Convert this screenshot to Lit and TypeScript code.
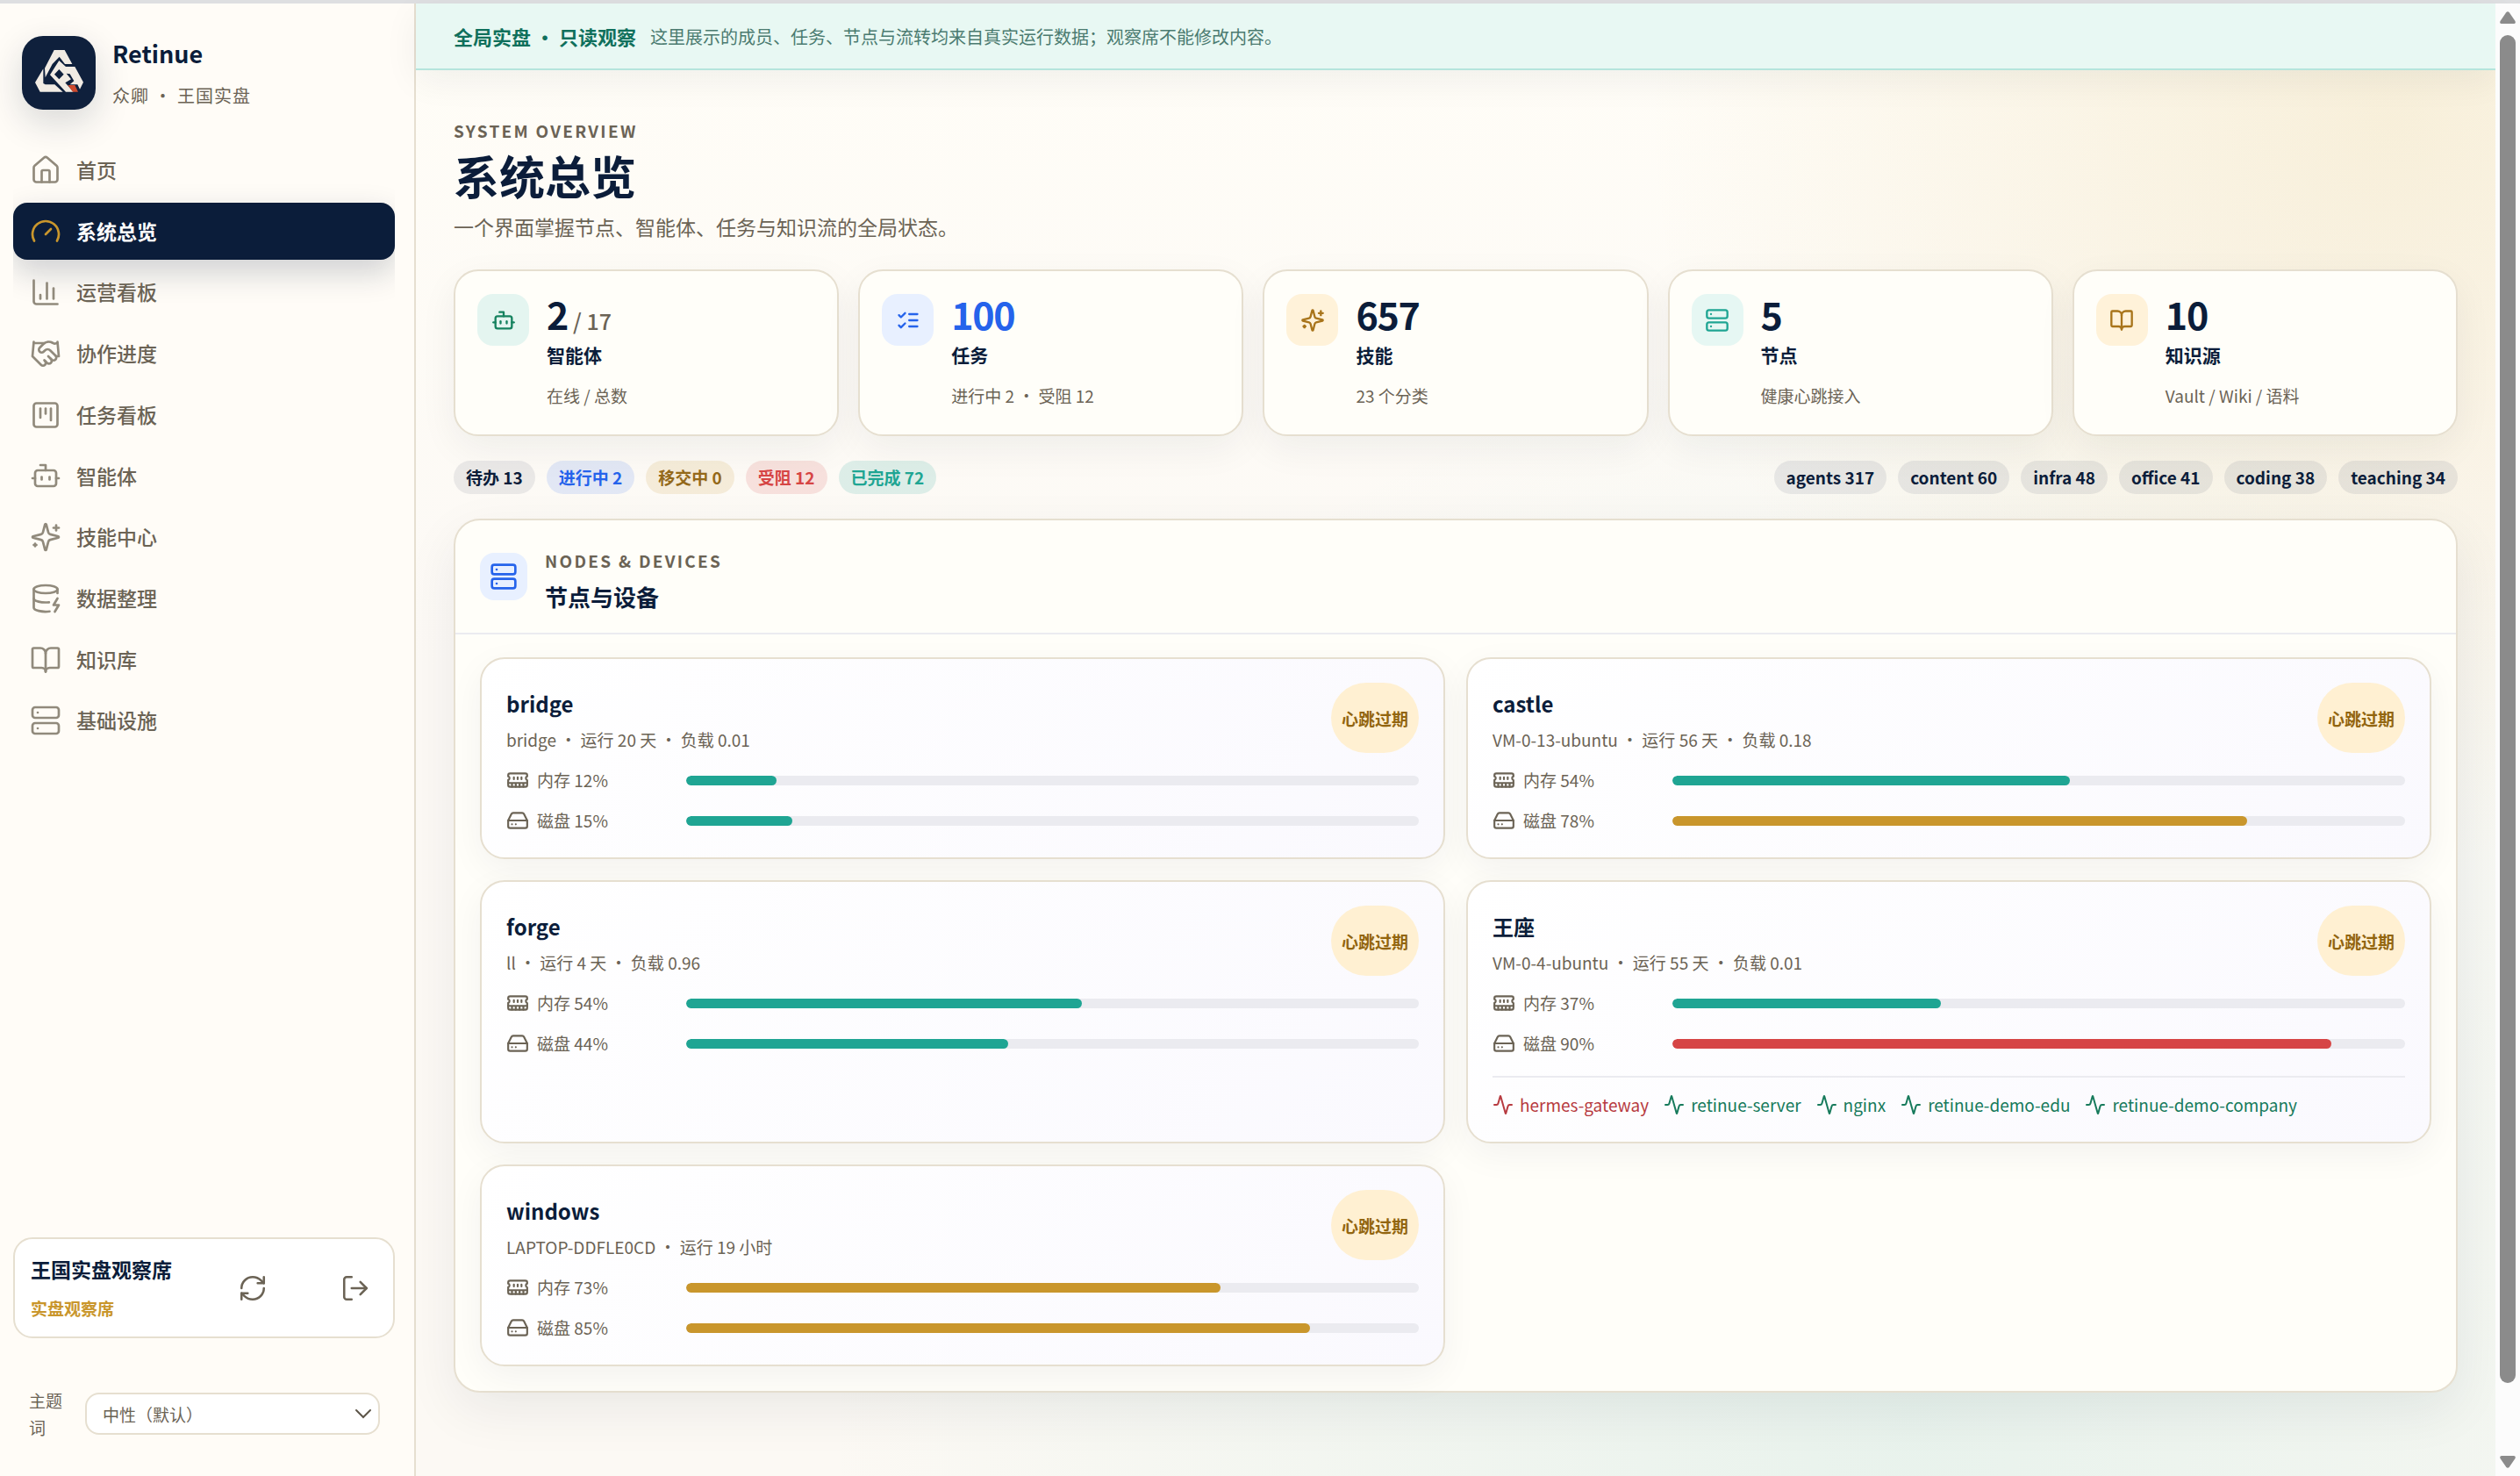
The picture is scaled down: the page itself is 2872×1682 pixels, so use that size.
import { LitElement, html, svg, css, nothing, type SVGTemplateResult } from 'lit';
import { customElement, property } from 'lit/decorators.js';
import { classMap } from 'lit/directives/class-map.js';
import { styleMap } from 'lit/directives/style-map.js';

const GLYPHS: Record<string, SVGTemplateResult> = {
  home: svg`<path d="M15 21v-8a1 1 0 0 0-1-1h-4a1 1 0 0 0-1 1v8"/><path d="M3 10a2 2 0 0 1 .709-1.528l7-5.999a2 2 0 0 1 2.582 0l7 5.999A2 2 0 0 1 21 10v9a2 2 0 0 1-2 2H5a2 2 0 0 1-2-2z"/>`,
  gauge: svg`<path d="m12 14 4-4"/><path d="M3.34 19a10 10 0 1 1 17.32 0"/>`,
  chart: svg`<path d="M3 3v16a2 2 0 0 0 2 2h16"/><path d="M18 17V9"/><path d="M13 17V5"/><path d="M8 17v-3"/>`,
  handshake: svg`<path d="m11 17 2 2a1 1 0 1 0 3-3"/><path d="m14 14 2.5 2.5a1 1 0 1 0 3-3l-3.88-3.88a3 3 0 0 0-4.24 0l-.88.88a1 1 0 1 1-3-3l2.81-2.81a5.79 5.79 0 0 1 7.06-.87l.47.28a2 2 0 0 0 1.42.25L21 4"/><path d="m21 3 1 11h-2"/><path d="M3 3 2 14l6.5 6.5a1 1 0 1 0 3-3"/><path d="M3 4h8"/>`,
  kanban: svg`<rect width="18" height="18" x="3" y="3" rx="2"/><path d="M8 7v7"/><path d="M12 7v4"/><path d="M16 7v9"/>`,
  bot: svg`<path d="M12 8V4H8"/><rect width="16" height="12" x="4" y="8" rx="2"/><path d="M2 14h2"/><path d="M20 14h2"/><path d="M15 13v2"/><path d="M9 13v2"/>`,
  sparkles: svg`<path d="M9.937 15.5A2 2 0 0 0 8.5 14.063l-6.135-1.582a.5.5 0 0 1 0-.962L8.5 9.936A2 2 0 0 0 9.937 8.5l1.582-6.135a.5.5 0 0 1 .963 0L14.063 8.5A2 2 0 0 0 15.5 9.937l6.135 1.581a.5.5 0 0 1 0 .964L15.5 14.063a2 2 0 0 0-1.437 1.437l-1.582 6.135a.5.5 0 0 1-.963 0z"/><path d="M20 3v4"/><path d="M22 5h-4"/><path d="M4 17v2"/><path d="M5 18H3"/>`,
  database: svg`<ellipse cx="12" cy="5" rx="9" ry="3"/><path d="M3 5V19A9 3 0 0 0 15 21.84"/><path d="M21 5V8"/><path d="M21 12L18 17H22L19 22"/><path d="M3 12A9 3 0 0 0 14.59 14.87"/>`,
  book: svg`<path d="M12 7v14"/><path d="M3 18a1 1 0 0 1-1-1V4a1 1 0 0 1 1-1h5a4 4 0 0 1 4 4 4 4 0 0 1 4-4h5a1 1 0 0 1 1 1v13a1 1 0 0 1-1 1h-6a3 3 0 0 0-3 3 3 3 0 0 0-3-3z"/>`,
  server: svg`<rect width="20" height="8" x="2" y="2" rx="2"/><rect width="20" height="8" x="2" y="14" rx="2"/><path d="M6 6h.01"/><path d="M6 18h.01"/>`,
  refresh: svg`<path d="M3 12a9 9 0 0 1 9-9 9.75 9.75 0 0 1 6.74 2.74L21 8"/><path d="M21 3v5h-5"/><path d="M21 12a9 9 0 0 1-9 9 9.75 9.75 0 0 1-6.74-2.74L3 16"/><path d="M8 16H3v5"/>`,
  logout: svg`<path d="m16 17 5-5-5-5"/><path d="M21 12H9"/><path d="M9 21H5a2 2 0 0 1-2-2V5a2 2 0 0 1 2-2h4"/>`,
  checks: svg`<path d="m3 17 2 2 4-4"/><path d="m3 7 2 2 4-4"/><path d="M13 6h8"/><path d="M13 12h8"/><path d="M13 18h8"/>`,
  memory: svg`<path d="M6 19v-3"/><path d="M10 19v-3"/><path d="M14 19v-3"/><path d="M18 19v-3"/><path d="M8 11V9"/><path d="M16 11V9"/><path d="M12 11V9"/><path d="M2 15h20"/><path d="M2 7a2 2 0 0 1 2-2h16a2 2 0 0 1 2 2v1.1a2 2 0 0 0 0 3.837V17a2 2 0 0 1-2 2H4a2 2 0 0 1-2-2v-5.1a2 2 0 0 0 0-3.837Z"/>`,
  disk: svg`<path d="M22 12H2"/><path d="M5.45 5.11 2 12v6a2 2 0 0 0 2 2h16a2 2 0 0 0 2-2v-6l-3.45-6.89A2 2 0 0 0 16.76 4H7.24a2 2 0 0 0-1.79 1.11z"/><path d="M6 16h.01"/><path d="M10 16h.01"/>`,
  activity: svg`<path d="M22 12h-2.48a2 2 0 0 0-1.93 1.46l-2.35 8.36a.25.25 0 0 1-.48 0L9.24 2.18a.25.25 0 0 0-.48 0l-2.35 8.36A2 2 0 0 1 4.49 12H2"/>`,
};

@customElement('line-icon')
export class LineIcon extends LitElement {
  @property() name = '';
  static styles = css`
    :host { display: block; flex: none; width: 1em; height: 1em; }
    .glyph {
      display: block; width: 100%; height: 100%; fill: none; stroke: currentColor;
      stroke-width: var(--stroke, 2); stroke-linecap: round; stroke-linejoin: round;
    }
  `;
  render() {
    return html`<svg class="glyph" viewBox="0 0 24 24" aria-hidden="true">${GLYPHS[this.name]}</svg>`;
  }
}

const NAV = [
  ['home', '首页'],
  ['gauge', '系统总览'],
  ['chart', '运营看板'],
  ['handshake', '协作进度'],
  ['kanban', '任务看板'],
  ['bot', '智能体'],
  ['sparkles', '技能中心'],
  ['database', '数据整理'],
  ['book', '知识库'],
  ['server', '基础设施'],
];

@customElement('side-bar')
export class SideBar extends LitElement {
  @property() active = '系统总览';
  static styles = css`
    :host {
      display: flex; flex-direction: column; box-sizing: border-box; width: 474px; flex: none;
      padding: 37px 22px 40px 15px; background: #fffcf7; border-right: 2px solid #e6dfd0;
    }
    .brand { display: flex; align-items: center; gap: 19px; padding-left: 10px; margin-bottom: 36px; }
    .logo { width: 84px; height: 84px; border-radius: 24px; background: #0f203c; box-shadow: 0 14px 40px rgba(11, 29, 58, .16); }
    .logo svg { display: block; width: 100%; height: 100%; }
    .brand-text { display: flex; flex-direction: column; gap: 15px; }
    .name { font-size: 27px; line-height: 36px; font-weight: 700; color: #0b1d3a; }
    .tagline { font-size: 20px; line-height: 30px; letter-spacing: 1px; color: #6b6355; }
    .nav { flex: 1; display: flex; flex-direction: column; gap: 4px; overflow: hidden; }
    .link {
      display: flex; align-items: center; gap: 17px; padding: 14px 19px; border-radius: 16px;
      font-size: 23px; line-height: 1.64; font-weight: 500; color: #6b6355; text-decoration: none;
    }
    .link line-icon { font-size: 36px; --stroke: 1.8; color: #918a7c; }
    .link.on { background: #0b1d3a; color: #fff; font-weight: 700; box-shadow: 0 14px 36px rgba(11, 29, 58, .2); }
    .link.on line-icon { color: #c9962c; }
    .user {
      display: flex; align-items: center; justify-content: space-between; padding: 17px 18px;
      background: #fff; border: 2px solid #e6dfd0; border-radius: 22px;
    }
    .who { display: flex; flex-direction: column; gap: 13px; }
    .who-name { font-size: 23px; line-height: 34px; font-weight: 700; color: #0b1d3a; }
    .who-role { font-size: 19px; line-height: 30px; font-weight: 700; color: #c9962c; }
    .tool {
      display: grid; place-items: center; width: 50px; height: 50px; padding: 0; border: 0;
      background: none; color: #6b6355; font-size: 34px; --stroke: 1.8; cursor: pointer;
    }
    .theme { display: flex; align-items: center; gap: 24px; padding: 0 17px 0 18px; margin-top: 55px; }
    .theme-label { width: 40px; font-size: 19px; line-height: 31px; color: #6b6355; }
    .pick { flex: 1; display: grid; align-items: center; }
    .pick > * { grid-area: 1 / 1; }
    .select {
      appearance: none; height: 48px; width: 100%; padding: 0 44px 0 18px; background: #fff;
      border: 2px solid #e6dfd0; border-radius: 16px; font: inherit; font-size: 19px; color: #6b6355;
    }
    .chev { justify-self: end; width: 20px; height: 12px; margin-right: 9px; fill: none; stroke: #5d5548; stroke-width: 2; stroke-linecap: round; pointer-events: none; }
  `;
  render() {
    return html`
      <div class="brand">
        <div class="logo">
          <svg viewBox="0 0 252 252" role="img" aria-label="Retinue">
            <g fill="#f1ebe3">
              <path d="M110 48H146L172 96H147L128 71L104 96L80 142L78 110Z"/>
              <path d="M73 112V162L80 166H112L140 191H62L45 159Z"/>
              <path fill-rule="evenodd" d="M127 84L150 105H181L210 158L198 182L190 166H164L178 154L164 130L152 128L168 148L148 160L176 191H150L96 133ZM127 114L111 131L127 148L143 131Z"/>
            </g>
            <path fill="#cd4a2e" d="M157 168H181L192 191H174Z"/>
          </svg>
        </div>
        <div class="brand-text">
          <div class="name">Retinue</div>
          <div class="tagline">众卿 · 王国实盘</div>
        </div>
      </div>
      <nav class="nav">
        ${NAV.map(([icon, label]) => html`
          <a href="#" class=${classMap({ link: true, on: label === this.active })}>
            <line-icon name=${icon}></line-icon><span>${label}</span>
          </a>`)}
      </nav>
      <div class="user">
        <div class="who">
          <div class="who-name">王国实盘观察席</div>
          <div class="who-role">实盘观察席</div>
        </div>
        <button class="tool" aria-label="刷新"><line-icon name="refresh"></line-icon></button>
        <button class="tool" aria-label="退出"><line-icon name="logout"></line-icon></button>
      </div>
      <div class="theme">
        <label class="theme-label" for="theme">主题词</label>
        <div class="pick">
          <select class="select" id="theme"><option>中性（默认）</option></select>
          <svg class="chev" viewBox="0 0 20 12" aria-hidden="true"><path d="M2 2l8 8 8-8"/></svg>
        </div>
      </div>
    `;
  }
}

interface NodeInfo {
  name: string;
  meta: string;
  mem: number;
  disk: number;
  services?: [string, boolean][];
}

const NODES: NodeInfo[] = [
  { name: 'bridge', meta: 'bridge · 运行 20 天 · 负载 0.01', mem: 12.3, disk: 14.5 },
  { name: 'castle', meta: 'VM-0-13-ubuntu · 运行 56 天 · 负载 0.18', mem: 54.2, disk: 78.4 },
  { name: 'forge', meta: 'll · 运行 4 天 · 负载 0.96', mem: 54, disk: 44 },
  {
    name: '王座', meta: 'VM-0-4-ubuntu · 运行 55 天 · 负载 0.01', mem: 36.6, disk: 89.9,
    services: [['hermes-gateway', false], ['retinue-server', true], ['nginx', true], ['retinue-demo-edu', true], ['retinue-demo-company', true]],
  },
  { name: 'windows', meta: 'LAPTOP-DDFLE0CD · 运行 19 小时', mem: 72.9, disk: 85.1 },
];

@customElement('node-card')
export class NodeCard extends LitElement {
  @property({ attribute: false }) node!: NodeInfo;
  static styles = css`
    :host {
      display: block; box-sizing: border-box; padding: 27px 28px; border: 2px solid #e6dfd0; border-radius: 28px;
      background: linear-gradient(135deg, #fff, #faf9fe); box-shadow: 0 12px 40px rgba(11, 29, 58, .05);
    }
    .head { display: flex; justify-content: space-between; margin-bottom: 16px; }
    .title { margin: 0 0 3px; font-size: 24px; line-height: 47px; font-weight: 700; color: #0b1d3a; }
    .meta { font-size: 19px; line-height: 30px; color: #6b6355; }
    .badge {
      display: flex; align-items: center; padding: 0 12px; border-radius: 40px; background: #fff0d2;
      font-size: 19px; font-weight: 700; color: #92650f;
    }
    .rows { display: grid; gap: 16px; }
    .row { display: grid; grid-template-columns: 205px 1fr; align-items: center; height: 30px; }
    .key { display: flex; align-items: center; gap: 9px; font-size: 19px; line-height: 30px; color: #6b6355; }
    .key line-icon { font-size: 26px; }
    .track { height: 11px; border-radius: 6px; background: #ebebf0; overflow: hidden; }
    .fill { height: 100%; border-radius: 6px; background: #1fa593; }
    .fill.warn { background: #c9962c; }
    .fill.bad { background: #d64545; }
    .services { display: flex; flex-wrap: wrap; gap: 8px 17px; margin-top: 22px; padding-top: 16px; border-top: 2px solid #ebebf0; }
    .svc { display: flex; align-items: center; gap: 7px; font-size: 19px; line-height: 30px; color: #167a5b; }
    .svc.down { color: #b73a40; }
    .svc line-icon { font-size: 24px; }
  `;
  private usage(icon: string, label: string, pct: number) {
    return html`
      <div class="row">
        <div class="key"><line-icon name=${icon}></line-icon><span>${label} ${Math.round(pct)}%</span></div>
        <div class="track" role="meter" aria-label=${label} aria-valuenow=${Math.round(pct)} aria-valuemin="0" aria-valuemax="100">
          <div class=${classMap({ fill: true, warn: pct >= 70 && pct < 88, bad: pct >= 88 })} style=${styleMap({ width: `${pct}%` })}></div>
        </div>
      </div>`;
  }
  render() {
    const n = this.node;
    return html`
      <div class="head">
        <div>
          <h3 class="title">${n.name}</h3>
          <div class="meta">${n.meta}</div>
        </div>
        <div class="badge">心跳过期</div>
      </div>
      <div class="rows">${this.usage('memory', '内存', n.mem)}${this.usage('disk', '磁盘', n.disk)}</div>
      ${n.services ? html`<div class="services">${n.services.map(([s, up]) => html`
        <span class=${classMap({ svc: true, down: !up })}><line-icon name="activity"></line-icon>${s}</span>`)}</div>` : nothing}
    `;
  }
}

const STATS = [
  { icon: 'bot', tone: 'green', value: '2', total: '17', label: '智能体', note: '在线 / 总数' },
  { icon: 'checks', tone: 'blue', value: '100', label: '任务', note: '进行中 2 · 受阻 12' },
  { icon: 'sparkles', tone: 'gold', value: '657', label: '技能', note: '23 个分类' },
  { icon: 'server', tone: 'teal', value: '5', label: '节点', note: '健康心跳接入' },
  { icon: 'book', tone: 'gold', value: '10', label: '知识源', note: 'Vault / Wiki / 语料' },
];

const STATES = [
  ['plain', '待办 13'], ['blue', '进行中 2'], ['gold', '移交中 0'], ['red', '受阻 12'], ['teal', '已完成 72'],
];

const TAGS = ['agents 317', 'content 60', 'infra 48', 'office 41', 'coding 38', 'teaching 34'];

@customElement('app-root')
export class AppRoot extends LitElement {
  static styles = css`
    :host {
      display: flex; box-sizing: border-box; min-height: 100vh; border-top: 4px solid #dedfe1;
      font-family: "Noto Sans CJK SC", "Noto Sans", sans-serif; color: #0b1d3a;
    }
    .main {
      flex: 1; min-width: 0;
      background:
        radial-gradient(circle at 95% 8%, rgba(206, 160, 44, .14), rgba(206, 160, 44, 0) 850px),
        radial-gradient(circle at 72% 96%, rgba(31, 175, 157, .09), rgba(31, 175, 157, 0) 1250px),
        linear-gradient(180deg, #fffdf7, #fcf9f5 45%, #fcf9f4);
    }
    .banner {
      display: flex; align-items: center; gap: 16px; height: 74px; padding: 0 43px;
      background: #e8f8f3; border-bottom: 2px solid #b5e5dc; box-shadow: 0 12px 40px rgba(11, 29, 58, .06);
      font-size: 20px; color: #4b7b70;
    }
    .banner strong { font-size: 22px; color: #10705c; }
    .content { display: flex; flex-direction: column; gap: 28px; padding: 55px 43px 60px; }
    .hero { margin-bottom: 3px; }
    .eyebrow { font-size: 19px; line-height: 28px; font-weight: 700; letter-spacing: .12em; color: #6b6355; }
    .title { margin: 6px 0 9px; font-size: 52px; line-height: 62px; font-weight: 700; }
    .lead { margin: 0; font-size: 23px; line-height: 36px; color: #6b6355; }
    .stats { display: grid; grid-template-columns: repeat(5, 1fr); gap: 22px; }
    .stat {
      display: flex; align-items: flex-start; gap: 20px; padding: 26px 25px; border: 2px solid #e6dfd0; border-radius: 28px;
      background: #fffef9; box-shadow: 0 14px 44px rgba(11, 29, 58, .06);
    }
    .stat-icon { display: grid; place-items: center; width: 59px; height: 59px; border-radius: 18px; font-size: 28px; }
    .stat-icon.green { background: #e4f5f0; color: #16825f; }
    .stat-icon.blue { background: #e8f0ff; color: #2563eb; }
    .stat-icon.gold { background: #fff2d9; color: #a8741a; }
    .stat-icon.teal { background: #e6f7f3; color: #1fa593; }
    .value { font-size: 43px; line-height: 44px; font-weight: 700; letter-spacing: -.03em; }
    .value.blue { color: #2563eb; }
    .total { font-size: 25px; line-height: 25px; font-weight: 500; letter-spacing: 0; color: #6b6355; margin-left: 6px; }
    .label { margin-top: 8px; font-size: 21px; line-height: 34px; font-weight: 700; }
    .note { margin-top: 13px; padding-bottom: 1px; font-size: 19px; line-height: 34px; color: #6b6355; }
    .chips { display: flex; justify-content: space-between; gap: 28px; }
    .group { display: flex; flex-wrap: wrap; gap: 13px; }
    .chip { padding: 0 14px; border-radius: 19px; font-size: 19px; line-height: 38px; font-weight: 700; background: rgba(11, 29, 58, .08); }
    .chip.blue { background: rgba(37, 99, 235, .12); color: #2563eb; }
    .chip.gold { background: rgba(201, 150, 44, .14); color: #94691a; }
    .chip.red { background: rgba(214, 69, 69, .14); color: #d64545; }
    .chip.teal { background: rgba(31, 165, 147, .14); color: #1fa593; }
    .panel { border: 2px solid #e6dfd0; border-radius: 30px; background: #fffef9; box-shadow: 0 20px 60px rgba(11, 29, 58, .07); }
    .panel-head { display: flex; align-items: center; gap: 20px; height: 128px; padding: 0 28px; border-bottom: 2px solid #ebebf0; }
    .panel-icon { display: grid; place-items: center; width: 54px; height: 54px; border-radius: 16px; background: #e8f0ff; color: #2563eb; font-size: 32px; }
    .panel-text { padding-top: 8px; }
    .panel-title { margin: 9px 0 0; font-size: 26px; line-height: 36px; font-weight: 700; }
    .nodes { display: grid; grid-template-columns: 1fr 1fr; gap: 24px; padding: 26px 28px 28px; }
    .scroll { display: flex; flex-direction: column; align-items: center; width: 28px; flex: none; background: #fcfcfc; padding: 9px 0; box-sizing: border-box; }
    .arrow { width: 18px; height: 14px; fill: #8b8b8b; flex: none; }
    .rail { flex: 1; width: 18px; padding: 13px 0 83px; display: flex; flex-direction: column; }
    .thumb { flex: 1; border-radius: 9px; background: #8b8b8b; }
  `;
  render() {
    return html`
      <side-bar></side-bar>
      <main class="main">
        <div class="banner"><strong>全局实盘 · 只读观察</strong><span>这里展示的成员、任务、节点与流转均来自真实运行数据；观察席不能修改内容。</span></div>
        <div class="content">
          <header class="hero">
            <div class="eyebrow">SYSTEM OVERVIEW</div>
            <h1 class="title">系统总览</h1>
            <p class="lead">一个界面掌握节点、智能体、任务与知识流的全局状态。</p>
          </header>
          <section class="stats">
            ${STATS.map((s) => html`
              <article class="stat">
                <div class="stat-icon ${s.tone}"><line-icon name=${s.icon}></line-icon></div>
                <div>
                  <div class=${classMap({ value: true, blue: s.tone === 'blue' })}>${s.value}${s.total ? html`<span class="total">/ ${s.total}</span>` : nothing}</div>
                  <div class="label">${s.label}</div>
                  <div class="note">${s.note}</div>
                </div>
              </article>`)}
          </section>
          <div class="chips">
            <div class="group">${STATES.map(([tone, text]) => html`<span class="chip ${tone}">${text}</span>`)}</div>
            <div class="group">${TAGS.map((t) => html`<span class="chip">${t}</span>`)}</div>
          </div>
          <section class="panel">
            <header class="panel-head">
              <div class="panel-icon"><line-icon name="server"></line-icon></div>
              <div class="panel-text">
                <div class="eyebrow">NODES &amp; DEVICES</div>
                <h2 class="panel-title">节点与设备</h2>
              </div>
            </header>
            <div class="nodes">${NODES.map((n) => html`<node-card .node=${n}></node-card>`)}</div>
          </section>
        </div>
      </main>
      <div class="scroll" aria-hidden="true">
        <svg class="arrow" viewBox="0 0 18 14"><path d="M7 1.500Q9-1 11 1.500L17.500 11Q18.500 14 16 14H2Q-.5 14 .5 11Z"/></svg>
        <div class="rail"><div class="thumb"></div></div>
        <svg class="arrow" viewBox="0 0 18 14"><path d="M7 12.500Q9 15 11 12.500L17.500 3Q18.500 0 16 0H2Q-.5 0 .5 3Z"/></svg>
      </div>
    `;
  }
}
